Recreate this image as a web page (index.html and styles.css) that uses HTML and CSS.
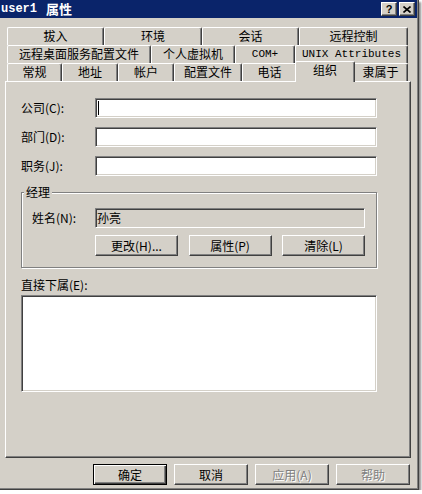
FILE: index.html
```html
<!DOCTYPE html>
<html lang="zh-CN">
<head>
    <meta charset="UTF-8">
    <link rel="stylesheet" href="styles.css">
</head>
<body>
    <div class="window">
        <div class="titlebar">
            <span class="title"><span class="title-name">user1</span><span>属性</span></span>
            <div class="caption-buttons">
                <span class="cap-btn cap-help">?</span>
                <span class="cap-btn">
                    <svg width="8" height="7" viewBox="0 0 8 7">
                        <path d="M0.5 0.5 L7.5 6.5 M7.5 0.5 L0.5 6.5" stroke="#000" stroke-width="1.6" fill="none"/>
                    </svg>
                </span>
            </div>
        </div>

        <div class="tabs">
            <div class="tab-row row-1">
                <span class="tab">拔入</span>
                <span class="tab">环境</span>
                <span class="tab">会话</span>
                <span class="tab">远程控制</span>
            </div>
            <div class="tab-row row-2">
                <span class="tab">远程桌面服务配置文件</span>
                <span class="tab">个人虚拟机</span>
                <span class="tab mono">COM+</span>
                <span class="tab mono">UNIX Attributes</span>
            </div>
            <div class="tab-row row-3">
                <span class="tab">常规</span>
                <span class="tab">地址</span>
                <span class="tab">帐户</span>
                <span class="tab">配置文件</span>
                <span class="tab">电话</span>
                <span class="tab active">组织</span>
                <span class="tab">隶属于</span>
            </div>
        </div>

        <div class="panel">
            <div class="field-row">
                <span class="label">公司(C):</span>
                <div class="field"><span class="caret"></span></div>
            </div>
            <div class="field-row">
                <span class="label">部门(D):</span>
                <div class="field"></div>
            </div>
            <div class="field-row">
                <span class="label">职务(J):</span>
                <div class="field"></div>
            </div>

            <div class="group">
                <span class="legend">经理</span>
                <div class="field-row name-row">
                    <span class="label">姓名(N):</span>
                    <div class="field readonly">孙亮</div>
                </div>
                <div class="group-buttons">
                    <span class="btn">更改(H)...</span>
                    <span class="btn">属性(P)</span>
                    <span class="btn">清除(L)</span>
                </div>
            </div>

            <div class="list-label">直接下属(E):</div>
            <div class="listbox"></div>
        </div>

        <div class="footer">
            <span class="btn default">确定</span>
            <span class="btn">取消</span>
            <span class="btn disabled">应用(A)</span>
            <span class="btn disabled">帮助</span>
        </div>
    </div>
</body>
</html>
```

FILE: styles.css
```css
* {
    box-sizing: border-box;
}

body {
    margin: 0;
    background-color: #fff;
    font-family: "Noto Sans CJK SC", sans-serif;
    font-size: 12px;
    color: #000;
}

.window {
    width: 419px;
    height: 490px;
    padding: 0 1px 1px 0;
    background-color: #d4d0c8;
    border-right: 1px solid #404040;
    border-bottom: 1px solid #404040;
    box-shadow: inset -1px -1px 0 #808080, 2px 2px 2px rgba(0, 0, 0, 0.45);
}

/* title bar */
.titlebar {
    height: 18px;
    background-color: #0a246a;
    color: #fff;
    display: flex;
    align-items: center;
    justify-content: space-between;
    padding: 0 2px 0 1px;
}

.title {
    display: flex;
    align-items: center;
    gap: 9px;
    font-weight: bold;
    font-size: 13px;
    line-height: 18px;
    height: 18px;
}

.title-name {
    font-family: "Liberation Mono", monospace;
    font-size: 12px;
}

.caption-buttons {
    display: flex;
    gap: 2px;
}

.cap-btn {
    width: 16px;
    height: 14px;
    background-color: #d4d0c8;
    border: 1px solid;
    border-color: #fff #404040 #404040 #fff;
    box-shadow: inset -1px -1px 0 #808080;
    display: flex;
    align-items: center;
    justify-content: center;
    color: #000;
}

.cap-help {
    font-family: "Liberation Sans", sans-serif;
    font-weight: bold;
    font-size: 11px;
    line-height: 12px;
}

/* tabs */
.tabs {
    margin: 9px 0 0 7px;
    width: 401px;
}

.tab-row {
    display: grid;
    height: 18px;
}

.row-1 {
    grid-template-columns: 97px 98px 97px 109px;
}

.row-2 {
    grid-template-columns: 144px 84px 60px 113px;
}

.row-3 {
    grid-template-columns: 55px 56px 56px 68px 55px 56px 55px;
}

.tab {
    background-color: #d4d0c8;
    border-top: 1px solid #fff;
    border-left: 1px solid #fff;
    border-right: 1px solid #404040;
    border-radius: 2px 2px 0 0;
    box-shadow: inset -1px 0 0 #808080;
    text-align: center;
    line-height: 16px;
    white-space: nowrap;
}

.tab.mono {
    font-family: "Liberation Mono", monospace;
    font-size: 11px;
}

.tab.active {
    margin: -2px -2px -1px;
    z-index: 1;
}

/* tab page */
.panel {
    margin-left: 5px;
    width: 406px;
    height: 377px;
    border: 1px solid;
    border-color: #fff #404040 #404040 #fff;
    box-shadow: inset -1px -1px 0 #808080;
    padding: 16px 0 0 15px;
}

.field-row {
    display: flex;
    align-items: center;
    height: 20px;
    margin-bottom: 9px;
}

.label {
    width: 74px;
    line-height: 16px;
}

.field {
    width: 282px;
    height: 20px;
    background-color: #fff;
    border: 1px solid;
    border-color: #808080 #fff #fff #808080;
    box-shadow: inset 1px 1px 0 #404040, inset -1px -1px 0 #d4d0c8;
    padding: 2px 0 0 2px;
    line-height: 15px;
}

.caret {
    display: block;
    width: 1px;
    height: 14px;
    background-color: #000;
}

.field.readonly {
    width: 270px;
    background-color: #d4d0c8;
    padding: 1px 0 0 1px;
}

.group {
    position: relative;
    width: 356px;
    height: 76px;
    margin-top: 16px;
    border: 1px solid #808080;
    box-shadow: inset 1px 1px 0 #fff, 1px 1px 0 #fff;
    padding: 15px 0 0 10px;
}

.legend {
    position: absolute;
    top: -9px;
    left: 2px;
    padding: 0 2px;
    background-color: #d4d0c8;
    line-height: 16px;
}

.name-row {
    margin-bottom: 7px;
}

.name-row .label {
    width: 63px;
}

.group-buttons {
    display: flex;
    justify-content: space-between;
    width: 270px;
    margin-left: 63px;
}

.btn {
    width: 83px;
    height: 21px;
    background-color: #d4d0c8;
    border: 1px solid;
    border-color: #fff #404040 #404040 #fff;
    box-shadow: inset -1px -1px 0 #808080;
    display: flex;
    align-items: center;
    justify-content: center;
    line-height: 16px;
}

.list-label {
    margin-top: 9px;
    line-height: 16px;
}

.listbox {
    width: 356px;
    height: 97px;
    margin-top: 2px;
    background-color: #fff;
    border: 1px solid;
    border-color: #808080 #fff #fff #808080;
    box-shadow: inset 1px 1px 0 #404040, inset -1px -1px 0 #d4d0c8;
}

/* dialog buttons */
.footer {
    display: flex;
    gap: 7px;
    margin: 6px 0 0 93px;
}

.footer .btn {
    width: 74px;
}

.btn.default {
    border-color: #000;
    box-shadow: inset 1px 1px 0 #fff, inset -1px -1px 0 #404040, inset -2px -2px 0 #808080;
}

.btn.disabled {
    color: #808080;
    text-shadow: 1px 1px 0 #fff;
}
```
